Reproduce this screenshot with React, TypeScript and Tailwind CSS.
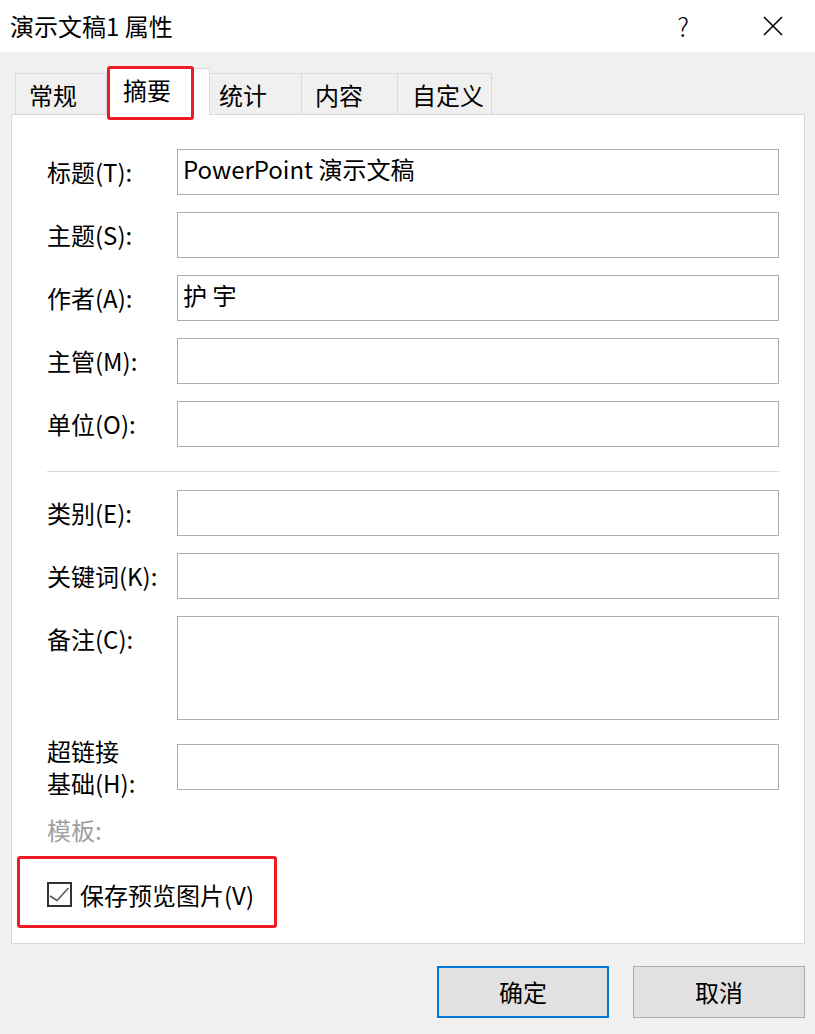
import React from "react";

const font = "font-['Noto_Sans_CJK_SC','Microsoft_YaHei',sans-serif]";

type Row = { label: React.ReactNode; value?: string; tall?: boolean };

const FieldRow = ({ label, value, tall }: Row) => (
  <div className={`flex flex-row ${tall ? "items-start" : "items-center"}`}>
    <div
      className={`w-[130px] shrink-0 text-[24px] leading-[32px] text-black ${
        tall ? "pt-[7px]" : ""
      }`}
    >
      {label}
    </div>
    <div
      className={`w-[602px] ${
        tall ? "h-[104px]" : "h-[46px]"
      } border border-[#abadb3] bg-white pl-[5px] pt-[3px] text-[24px] leading-[32px] text-black`}
    >
      {value}
    </div>
  </div>
);

const tabs = [
  { name: "常规", w: "w-[92px]", pl: "pl-[13px]", first: true },
  { name: "摘要", w: "w-[103px]", pl: "pl-[16px]", active: true },
  { name: "统计", w: "w-[92px]", pl: "pl-[9px]" },
  { name: "内容", w: "w-[96px]", pl: "pl-[13px]" },
  { name: "自定义", w: "w-[94px]", pl: "pl-[14px]" },
];

const App = () => {
  return (
    <div className={`w-[815px] h-[1034px] bg-[#f0f0f0] ${font} text-black overflow-hidden`}>
      {/* title bar */}
      <div className="h-[52px] bg-white flex flex-row items-center pl-[10px]">
        <div className="text-[24px] leading-[32px]">演示文稿1 属性</div>
        <div className="ml-auto w-[30px] text-center text-[26px] font-light leading-[32px] mr-[65px]">
          ?
        </div>
        <svg width="20" height="20" viewBox="0 0 20 20" className="mr-[32px]">
          <path d="M1 1 L19 19 M19 1 L1 19" stroke="#000" strokeWidth="1.6" />
        </svg>
      </div>

      {/* tabs */}
      <div className="flex flex-row items-end pl-[15px] pt-[16px]">
        {tabs.map((t) =>
          t.active ? (
            <div
              key={t.name}
              className={`relative z-10 ${t.w} h-[47px] -mb-px bg-white border-t border-r border-[#d9d9d9] ${t.pl} pt-[5px] text-[24px] leading-[32px]`}
            >
              {t.name}
              <div className="absolute left-0 top-[-3px] w-[87px] h-[54px] border-[3px] border-[#ec1c24] rounded-[3px]" />
            </div>
          ) : (
            <div
              key={t.name}
              className={`${t.w} h-[41px] bg-[#f0f0f0] border-t border-r ${
                t.first ? "border-l" : ""
              } border-[#d9d9d9] ${t.pl} pt-[5px] text-[24px] leading-[32px]`}
            >
              {t.name}
            </div>
          )
        )}
      </div>

      {/* panel */}
      <div className="ml-[11px] w-[794px] h-[830px] bg-white border border-[#d9d9d9] pl-[35px] pt-[34px]">
        <div className="flex flex-col gap-[17px]">
          <FieldRow label="标题(T):" value="PowerPoint 演示文稿" />
          <FieldRow label="主题(S):" />
          <FieldRow label="作者(A):" value="护 宇" />
          <FieldRow label="主管(M):" />
          <FieldRow label="单位(O):" />
        </div>
        <div className="mt-[24px] mb-[18px] w-[732px] h-px bg-[#d9d9d9]" />
        <div className="flex flex-col gap-[17px]">
          <FieldRow label="类别(E):" />
          <FieldRow label="关键词(K):" />
          <FieldRow label="备注(C):" tall />
        </div>
        <div className="mt-[15px]">
          <FieldRow
            label={
              <>
                超链接
                <br />
                基础(H):
              </>
            }
          />
        </div>
        <div className="mt-[15px] text-[24px] leading-[32px] text-[#a0a0a0]">模板:</div>
        <div className="relative mt-[36px] flex flex-row items-center h-[25px]">
          <div className="absolute left-[-30px] top-[-26px] w-[260px] h-[72px] border-[3px] border-[#ec1c24] rounded-[3px]" />
          <svg width="25" height="25" viewBox="0 0 25 25" className="shrink-0">
            <rect x="1" y="1" width="23" height="23" fill="#fff" stroke="#333" strokeWidth="2" />
            <path d="M3 14 L10 18.5 L21.5 6" fill="none" stroke="#555" strokeWidth="1.5" />
          </svg>
          <div className="ml-[8px] text-[24px] leading-[32px]">保存预览图片(V)</div>
        </div>
      </div>

      {/* buttons */}
      <div className="flex flex-row justify-end gap-[24px] pr-[10px] mt-[22px]">
        <button className="w-[172px] h-[52px] bg-[#e1e1e1] border-2 border-[#0078d7] text-[24px] leading-[32px]">
          确定
        </button>
        <button className="w-[172px] h-[52px] bg-[#e1e1e1] border border-[#adadad] text-[24px] leading-[32px]">
          取消
        </button>
      </div>
    </div>
  );
};

export default App;
